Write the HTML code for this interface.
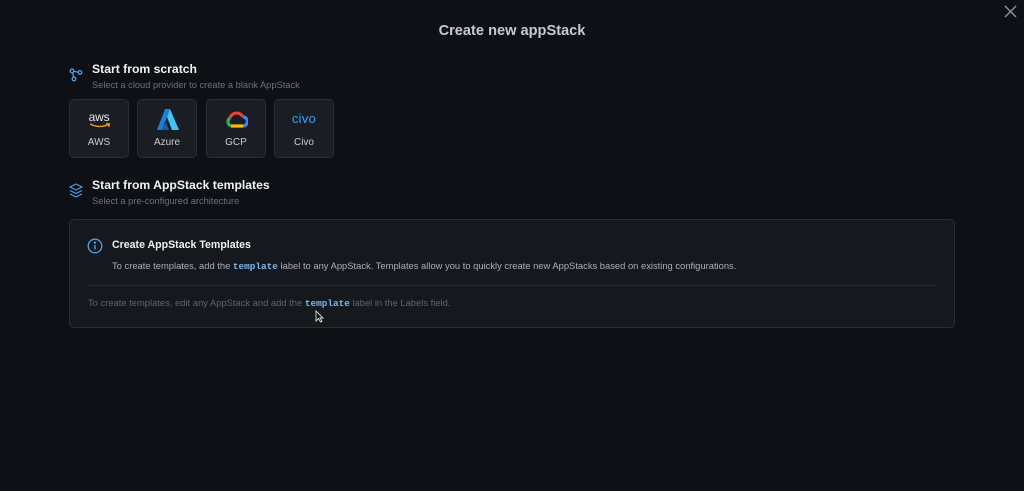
<!DOCTYPE html>
<html><head><style>
*{margin:0;padding:0;box-sizing:border-box}
body{width:1024px;height:491px;background:#0e1015;font-family:"Liberation Sans",sans-serif;color:#e6e8eb;position:relative;overflow:hidden}
.abs{position:absolute}
h1{position:absolute;left:0;width:1024px;top:23px;text-align:center;font-size:14.6px;font-weight:bold;color:#c5cad2}
.t{font-size:12.2px;font-weight:bold;color:#f0f2f4}
.s{font-size:9.3px;color:#6b727c}
.card{position:absolute;top:99px;width:60px;height:59px;background:#1a1d23;border:1px solid #2a2e35;border-radius:5px}
.card .l{position:absolute;top:37px;width:100%;text-align:center;font-size:10px;color:#c9cdd3}
.box{position:absolute;left:69px;top:219px;width:886px;height:109px;background:#15181d;border:1px solid #2a2e35;border-radius:5px}
code{font-family:"Liberation Mono",monospace;color:#7cb6f0;font-weight:bold;font-size:9.4px}
</style></head><body>
<h1>Create new appStack</h1>
<svg class="abs" style="left:1004px;top:5px" width="13" height="13" viewBox="0 0 13 13"><path d="M1 1L12 12M12 1L1 12" stroke="#8a9099" stroke-width="1.5"/></svg>
<svg class="abs" style="left:69px;top:68px" width="14" height="14" viewBox="0 0 14 14" fill="none" stroke="#4a9ee8" stroke-width="1.3"><circle cx="3" cy="3" r="1.8"/><circle cx="11" cy="4.5" r="1.8"/><circle cx="5" cy="11" r="1.8"/><path d="M4.8 3.3L9.2 4.2M3.6 4.7L4.6 9.2"/></svg>
<div class="abs t" style="left:92px;top:62px">Start from scratch</div>
<div class="abs s" style="left:92px;top:80px">Select a cloud provider to create a blank AppStack</div>
<div class="card" style="left:69px"><div class="abs" style="left:0;width:100%;text-align:center;top:10px;font-size:12px;color:#e6e8eb;letter-spacing:-.2px">aws</div><svg class="abs" style="left:19px;top:23px" width="22" height="6"><path d="M1 1Q11 6 20 1M17 0.5L20.5 1L19.5 4" stroke="#f29c1f" stroke-width="1.3" fill="none"/></svg><div class="l">AWS</div></div>
<div class="card" style="left:137px"><svg class="abs" style="left:19px;top:9px" width="22" height="21" viewBox="0 0 22 21"><path d="M8 0H13L5 21H0Z" fill="#1f7fd6"/><path d="M13 0L22 21H15L10 8Z" fill="#3ec4f5"/><path d="M9 13L12 21H4Z" fill="#0f5fb0"/></svg><div class="l">Azure</div></div>
<div class="card" style="left:206px"><svg class="abs" style="left:19px;top:11px" width="22" height="18" viewBox="0 0 22 18" fill="none" stroke-width="3.2"><path d="M5 15A4.5 4.5 0 0 1 4 7" stroke="#34a853"/><path d="M4 7A7 7 0 0 1 17 6" stroke="#ea4335"/><path d="M17 6A4.5 4.5 0 0 1 17 15" stroke="#4285f4"/><path d="M5 15H17" stroke="#fbbc05"/></svg><div class="l">GCP</div></div>
<div class="card" style="left:274px"><div class="abs" style="left:0;width:100%;text-align:center;top:11px;font-size:13px;color:#3aa0f0;letter-spacing:.3px">civo</div><div class="l">Civo</div></div>
<svg class="abs" style="left:69px;top:183px" width="14" height="15" viewBox="0 0 14 15" fill="none" stroke="#4a9ee8" stroke-width="1.2"><path d="M7 1L13 4L7 7L1 4Z"/><path d="M1 7.5L7 10.5L13 7.5"/><path d="M1 11L7 14L13 11"/></svg>
<div class="abs t" style="left:92px;top:178px">Start from AppStack templates</div>
<div class="abs s" style="left:92px;top:196px">Select a pre-configured architecture</div>
<div class="box">
<svg class="abs" style="left:17px;top:18px" width="16" height="16" viewBox="0 0 16 16" fill="none" stroke="#4a9ee8" stroke-width="1.4"><circle cx="8" cy="8" r="6.8"/><path d="M8 7V11.5"/><circle cx="8" cy="4.6" r=".5" fill="#4a9ee8"/></svg>
<div class="abs" style="left:42px;top:19px;font-size:10.6px;font-weight:bold;color:#f0f2f4">Create AppStack Templates</div>
<div class="abs" style="left:42px;top:40px;font-size:9.4px;color:#aab0b8;white-space:nowrap">To create templates, add the <code>template</code> label to any AppStack. Templates allow you to quickly create new AppStacks based on existing configurations.</div>
<div class="abs" style="left:18px;top:65px;width:848px;height:1px;background:#262a30"></div>
<div class="abs" style="left:18px;top:77px;font-size:9.4px;color:#5e656e;white-space:nowrap">To create templates, edit any AppStack and add the <code>template</code> label in the Labels field.</div>
</div>
<svg class="abs" style="left:315px;top:310px" width="9" height="13" viewBox="0 0 9 13"><path d="M1 1V11L3.5 8.5L5.5 12L7 11.3L5 8H8Z" fill="#111" stroke="#ddd" stroke-width=".9"/></svg>
</body></html>
